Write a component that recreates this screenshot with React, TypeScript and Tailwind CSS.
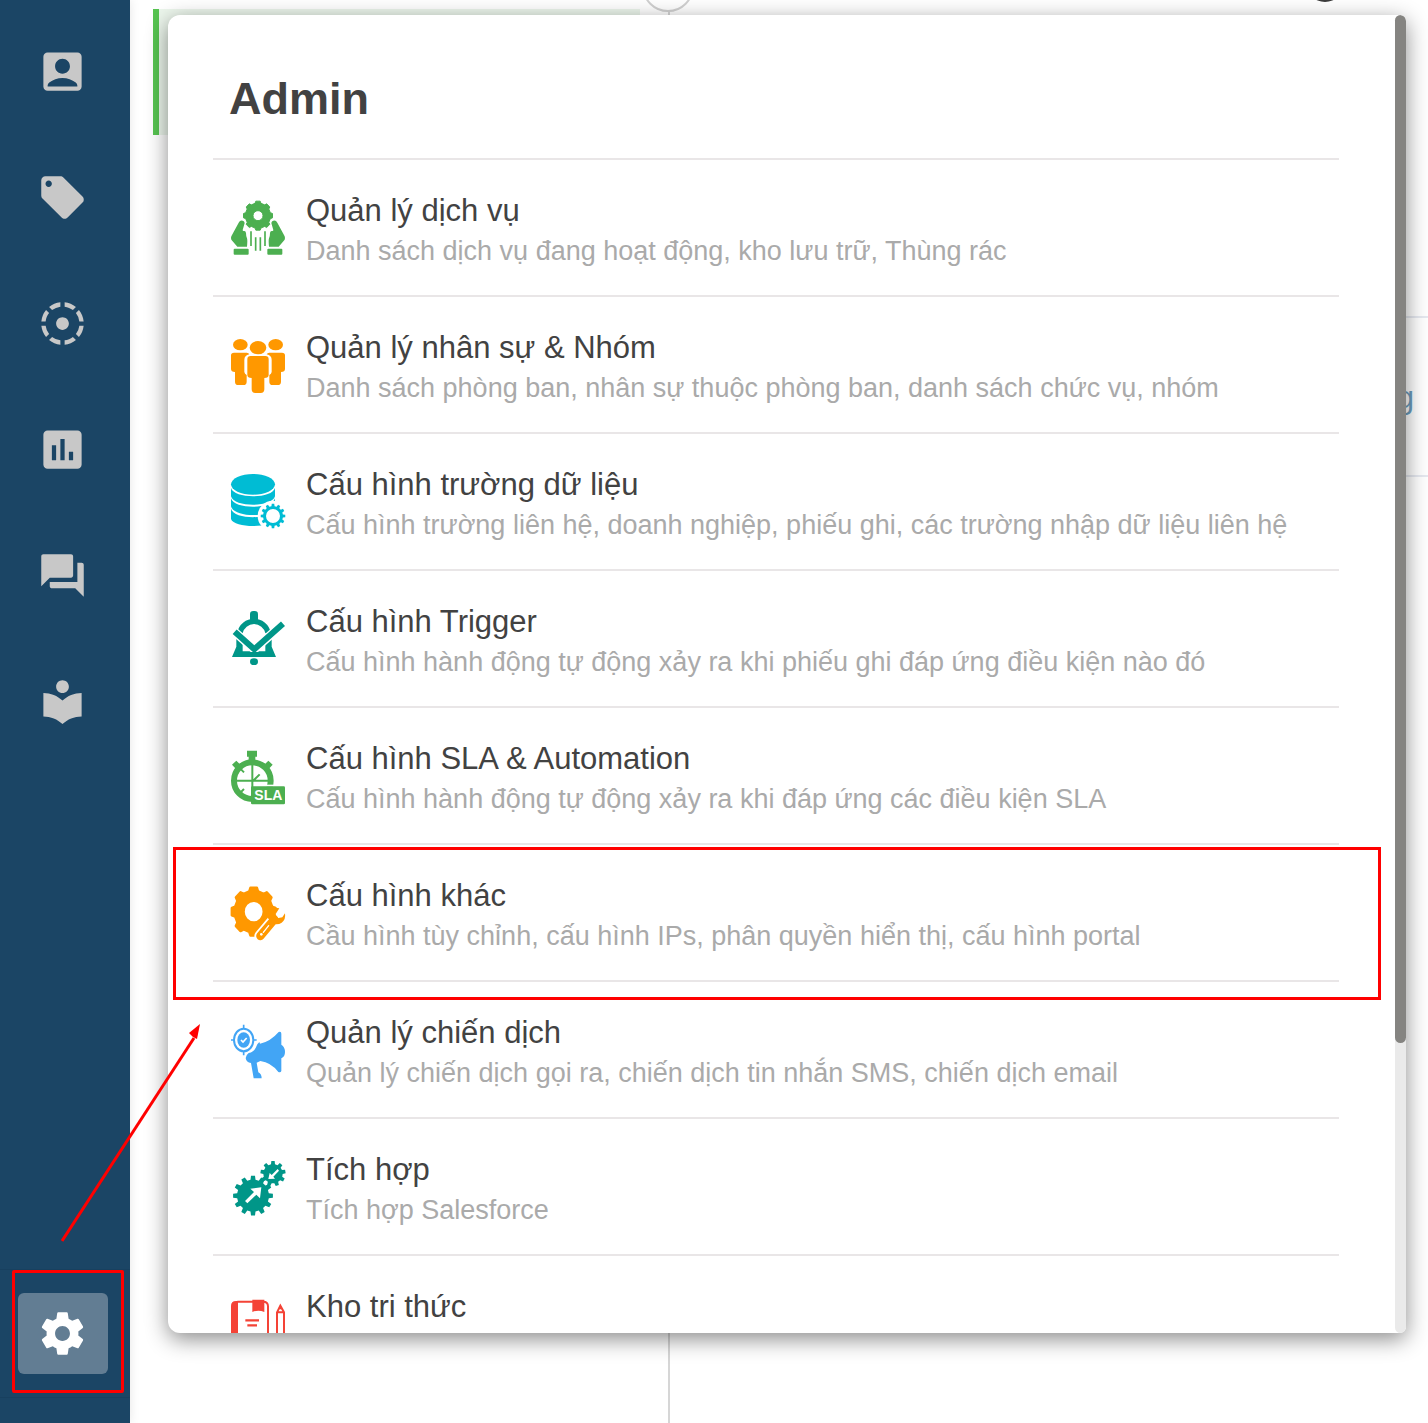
import React from 'react';
import {
  MdAccountBox,
  MdFilterTiltShift,
  MdForum,
  MdInsertChart,
  MdLocalLibrary,
  MdLocalOffer,
} from 'react-icons/md';

interface MenuItem {
  title: string;
  desc: string;
  icon: React.ReactNode;
  highlighted?: boolean;
}

// Builds a gear outline with square teeth around (cx, cy)
const gearPath = (cx: number, cy: number, outer: number, root: number, teeth: number, hole = 0) => {
  const step = (Math.PI * 2) / teeth;
  const pt = (r: number, a: number) => `${(cx + r * Math.sin(a)).toFixed(1)} ${(cy - r * Math.cos(a)).toFixed(1)}`;
  const points: string[] = [];
  for (let i = 0; i < teeth; i++) {
    const a = i * step;
    points.push(pt(root, a - step * 0.3), pt(outer, a - step * 0.19), pt(outer, a + step * 0.19), pt(root, a + step * 0.3));
  }
  let d = `M${points.join('L')}Z`;
  if (hole) {
    d += `M${cx - hole} ${cy}a${hole} ${hole} 0 1 0 ${hole * 2} 0a${hole} ${hole} 0 1 0 ${-hole * 2} 0Z`;
  }
  return d;
};

const iconClass = "w-[54px] h-[54px] shrink-0 mt-[10px] overflow-visible";

const ServiceIcon = () => {
  const hand = 'M64 167L86 126q4-8 12-6q8 3 5 11L98 148q0 4 4 3q5-1 6 6q0 10 3 16q2 5 0 25H82L64 177q-2-5 0-10Z';
  return (
    <svg viewBox="63 61 162 162" className={iconClass} fill="#4caf50">
      <path d={gearPath(144, 105, 44, 38, 8, 15)} fillRule="evenodd" stroke="#4caf50" strokeWidth="3" strokeLinejoin="round" />
      <path d={hand} />
      <rect x="71" y="204" width="45" height="18" rx="3" />
      <g transform="translate(288 0) scale(-1 1)">
        <path d={hand} />
        <rect x="71" y="204" width="45" height="18" rx="3" />
      </g>
      <path d="M123 152V196M137 170V210M151 170V210M165 152V196" stroke="#4caf50" strokeWidth="5" />
    </svg>
  );
};

const PeopleIcon = () => {
  const side = 'M63 526q0-8 9-8h38q6 0 8 5q-15 3-15 17v36q1 6 7 9v20q0 10-10 10H85q-10 0-10-10V576q-12 0-12-9Z';
  return (
    <svg viewBox="63 474 162 162" className={iconClass} fill="#ff9800">
      <ellipse cx="91" cy="494" rx="22" ry="17" />
      <ellipse cx="197" cy="494" rx="22" ry="17" />
      <ellipse cx="144" cy="503" rx="25" ry="20" />
      <path d={side} />
      <path d={side} transform="translate(288 0) scale(-1 1)" />
      <path d="M112 538q0-10 10-10h44q10 0 10 10v47q0 9-13 9v34q0 11-11 11h-16q-11 0-11-11v-34q-13 0-13-9Z" />
    </svg>
  );
};

const DatabaseIcon = () => (
  <svg viewBox="63 75 162 162" className={iconClass} fill="#00bcd4">
    <ellipse cx="129" cy="103" rx="66" ry="31" />
    <path d="M63 114C72 147 186 147 195 114V139C186 173 72 173 63 139Z" />
    <path d="M63 145C72 179 186 179 195 145V169C186 204 72 204 63 169Z" />
    <path d="M63 176C72 210 186 210 195 176V207C186 235 72 235 63 207Z" />
    <circle cx="189" cy="198" r="46" fill="#fff" />
    <path d={gearPath(189, 198, 37, 30, 12, 21)} fillRule="evenodd" />
  </svg>
);

const TriggerIcon = () => (
  <svg viewBox="63 486 162 162" className={iconClass} fill="#009688">
    <rect x="120" y="483" width="24" height="34" rx="10" />
    <path d="M90 548A43 43 0 0 1 174 548" fill="none" stroke="#009688" strokeWidth="16" />
    <path d="M79 566L98 580V604H166V580L185 564V590L198 621H66L79 590Z" />
    <path d="M70 542L133 598L223 518" fill="none" stroke="#fff" strokeWidth="26" />
    <path d="M74 545L133 598L219 521" fill="none" stroke="#009688" strokeWidth="18" />
    <path d="M84 606H180L187 621H78Z" />
    <ellipse cx="132" cy="635" rx="12" ry="10" />
  </svg>
);

const SlaIcon = () => (
  <svg viewBox="63 58 162 162" className={iconClass} fill="#4caf50">
    <circle cx="127" cy="153" r="55" fill="none" stroke="#4caf50" strokeWidth="18" />
    <path d="M111 63h30v18h-5v14h-20V81h-5Z" />
    <path d="M66 105l13-12l12 12l-13 13ZM188 105l-13-12l-12 12l13 13Z" />
    <path d="M127 105V200M80 153H174M127 156L149 134M91 117l11 11M91 189l11-11" fill="none" stroke="#4caf50" strokeWidth="6" />
    <rect x="132" y="165" width="93" height="6" fill="#fff" />
    <rect x="123" y="170" width="102" height="54" rx="4" />
    <text x="175" y="212" textAnchor="middle" fontFamily="Liberation Sans, Arial, sans-serif" fontWeight="700" fontSize="42" fill="#fff">SLA</text>
  </svg>
);

const OtherIcon = () => (
  <svg viewBox="63 468 162 162" className={iconClass} fill="#ff9800">
    <g transform="translate(131 545) scale(0.92 1)">
      <path d={gearPath(0, 0, 72, 62, 8, 33)} fillRule="evenodd" stroke="#ff9800" strokeWidth="8" strokeLinejoin="round" />
    </g>
    <path d="M151 618L193 568" stroke="#fff" strokeWidth="36" strokeLinecap="round" />
    <circle cx="204" cy="560" r="26" fill="#fff" />
    <path d="M151 618L193 568" stroke="#ff9800" strokeWidth="25" strokeLinecap="round" />
    <path d="M208 535l-11 17l5 13l15-3l8-12q3 19-10 28q-9 6-22 4l-20-18q-1-18 9-26q10-8 26-3Z" />
    <path d="M160 607L176 587" stroke="#fff" strokeWidth="4" strokeLinecap="round" />
    <circle cx="154" cy="613" r="4" fill="#fff" />
  </svg>
);

const CampaignIcon = () => (
  <svg viewBox="63 40 162 162" className={iconClass} fill="#42a5f5">
    <path d="M107 145q1-9 9-15q18-3 26-26l6-7l2 5Q181 96 206 67q8-3 8 5v33q11 7 11 22q0 14-11 19v38q-2 6-9 3Q183 158 151 154l-11 5l5 29q10 5 10 18h-24L123 160q-14-1-16-15Z" />
    <ellipse cx="101" cy="91" rx="29" ry="34" fill="none" stroke="#42a5f5" strokeWidth="6" />
    <ellipse cx="101" cy="91" rx="19" ry="23" />
    <path d="M101 45V57M101 125V137M63 91H72M130 91H140" stroke="#42a5f5" strokeWidth="5" />
    <path d="M93 91l6 6l11-12" fill="none" stroke="#fff" strokeWidth="5" />
  </svg>
);

const IntegrationIcon = () => (
  <svg viewBox="63 450 162 162" className={iconClass} fill="#009688">
    <path d={gearPath(129, 557, 60, 48, 12)} />
    <path d={gearPath(189, 491, 38, 29, 9)} />
    <path d="M105 573L132 546L121 536L154 532L150 565L139 554L112 580Z" fill="#fff" />
    <path d="M203 477L185 495L179 489L175 507L195 506L190 500L207 482Z" fill="#fff" />
  </svg>
);

const KnowledgeIcon = () => (
  <svg viewBox="243 82 162 162" className={iconClass} fill="#f44336">
    <path d="M264 252h-8q-13 0-13-13V109q0-15 15-15h6Z" />
    <path d="M262 96h78q14 0 14 14v129q0 11-11 11h-81" fill="none" stroke="#f44336" strokeWidth="6" />
    <path d="M307 90h36v37q-18-8-36 0Z" />
    <path d="M286 152H327M292 167H321" stroke="#f44336" strokeWidth="7" />
    <path d="M381 128L391 108L402 128V238H381ZM381 128H402" fill="none" stroke="#f44336" strokeWidth="6" />
    <path d="M384 119l7-13l7 13Z" />
  </svg>
);

const SettingsIcon = () => (
  <svg viewBox="0 0 24 24" className="size-[51px]" fill="currentColor">
    <path d="M19.43 12.98c.04-.32.07-.64.07-.98s-.03-.66-.07-.98l2.11-1.65c.19-.15.24-.42.12-.64l-2-3.46c-.12-.22-.39-.3-.61-.22l-2.49 1c-.52-.4-1.08-.73-1.69-.98l-.38-2.65C14.46 2.18 14.25 2 14 2h-4c-.25 0-.46.18-.49.42l-.38 2.65c-.61.25-1.17.59-1.69.98l-2.49-1c-.23-.09-.49 0-.61.22l-2 3.46c-.13.22-.07.49.12.64l2.11 1.65c-.04.32-.07.65-.07.98s.03.66.07.98l-2.11 1.65c-.19.15-.24.42-.12.64l2 3.46c.12.22.39.3.61.22l2.49-1c.52.4 1.08.73 1.69.98l.38 2.65c.03.24.24.42.49.42h4c.25 0 .46-.18.49-.42l.38-2.65c.61-.25 1.17-.59 1.69-.98l2.49 1c.23.09.49 0 .61-.22l2-3.46c.12-.22.07-.49-.12-.64l-2.11-1.65zM12 15.5c-1.93 0-3.5-1.57-3.5-3.5s1.57-3.5 3.5-3.5 3.5 1.57 3.5 3.5-1.57 3.5-3.5 3.5z" />
  </svg>
);

const MENU: MenuItem[] = [
  { title: 'Quản lý dịch vụ', desc: 'Danh sách dịch vụ đang hoạt động, kho lưu trữ, Thùng rác', icon: <ServiceIcon /> },
  { title: 'Quản lý nhân sự & Nhóm', desc: 'Danh sách phòng ban, nhân sự thuộc phòng ban, danh sách chức vụ, nhóm', icon: <PeopleIcon /> },
  { title: 'Cấu hình trường dữ liệu', desc: 'Cấu hình trường liên hệ, doanh nghiệp, phiếu ghi, các trường nhập dữ liệu liên hệ', icon: <DatabaseIcon /> },
  { title: 'Cấu hình Trigger', desc: 'Cấu hình hành động tự động xảy ra khi phiếu ghi đáp ứng điều kiện nào đó', icon: <TriggerIcon /> },
  { title: 'Cấu hình SLA & Automation', desc: 'Cấu hình hành động tự động xảy ra khi đáp ứng các điều kiện SLA', icon: <SlaIcon /> },
  { title: 'Cấu hình khác', desc: 'Cầu hình tùy chỉnh, cấu hình IPs, phân quyền hiển thị, cấu hình portal', icon: <OtherIcon />, highlighted: true },
  { title: 'Quản lý chiến dịch', desc: 'Quản lý chiến dịch gọi ra, chiến dịch tin nhắn SMS, chiến dịch email', icon: <CampaignIcon /> },
  { title: 'Tích hợp', desc: 'Tích hợp Salesforce', icon: <IntegrationIcon /> },
  { title: 'Kho tri thức', desc: 'Câu hỏi', icon: <KnowledgeIcon /> },
];

const NAV = [
  { label: 'Liên hệ', Icon: MdAccountBox },
  { label: 'Phiếu ghi', Icon: MdLocalOffer },
  { label: 'Chiến dịch', Icon: MdFilterTiltShift },
  { label: 'Báo cáo', Icon: MdInsertChart },
  { label: 'Trò chuyện', Icon: MdForum },
  { label: 'Kho tri thức', Icon: MdLocalLibrary },
];

const navButtonClass = "flex items-center justify-center w-[90px] h-[81px] pr-px pb-px rounded-md";

const Sidebar = () => (
  <nav className="relative z-10 flex flex-col justify-between w-[130px] shrink-0 bg-[#1b4565] shadow-[0_0_10px_rgba(0,0,0,0.1)]">
    <div className="flex flex-col gap-[45px] pt-[31px] pl-[18px]">
      {NAV.map(({ label, Icon }) => (
        <button key={label} type="button" aria-label={label} className={`${navButtonClass} text-[#c8c8c8]`}>
          <Icon size={51} />
        </button>
      ))}
    </div>
    <div className="relative mb-[25px] py-[23px] pl-[18px] border-y border-[#18405f]">
      <button type="button" aria-label="Cài đặt" className={`${navButtonClass} bg-[#627d93] text-white`}>
        <SettingsIcon />
      </button>
      <div className="absolute top-0 bottom-1 left-3 right-[6px] border-3 border-[#ff0000] rounded-xs" />
    </div>
  </nav>
);

// Page content that stays behind the admin menu
const Backdrop = () => (
  <main className="relative flex flex-1 overflow-hidden">
    <section className="w-[540px] shrink-0 pt-[9px] pl-[23px] pr-[28px] border-r-2 border-[#d6d6d6]">
      <div className="h-[126px] bg-[#ecf6ec] border-l-6 border-[#57c451]" />
    </section>
    <section className="flex-1">
      <div className="h-[318px] border-b-2 border-[#e6e9f0]" />
      <div className="flex items-center justify-end h-[159px] pt-1 pr-[14px] border-b-2 border-[#e6e9f0] text-[31px] text-[#6c9dbd]">g</div>
    </section>
    <div className="absolute -top-10 left-[512px] size-[52px] rounded-full bg-white border-2 border-[#d0d0d0]" />
    <div className="absolute -top-9 right-[84px] size-[38px] rounded-full bg-[#3c3c3c]" />
  </main>
);

const MenuRow: React.FC<{ item: MenuItem }> = ({ item }) => (
  <li className="relative border-b-2 border-[#e9e6e7]">
    <a href="#" className="flex gap-[21px] pt-[31px] pb-6 pl-[18px]">
      {item.icon}
      <span className="flex flex-col whitespace-nowrap">
        <span className="text-[31px] leading-[40px] text-[#424242]">{item.title}</span>
        <span className="text-[27px] leading-[40px] text-[#aaaaaa]">{item.desc}</span>
      </span>
    </a>
    {item.highlighted && (
      <div className="pointer-events-none absolute z-10 top-[2px] -bottom-5 -left-10 -right-[42px] border-3 border-[#ff0000]" />
    )}
  </li>
);

export default function App() {
  return (
    <div className="relative flex h-screen overflow-hidden bg-white font-['Liberation_Sans',Arial,sans-serif]">
      <Sidebar />
      <Backdrop />

      <div className="absolute top-[15px] bottom-[90px] left-[168px] right-[22px] flex overflow-hidden rounded-l-xl rounded-r-md bg-white shadow-[0_6px_22px_rgba(0,0,0,0.46)]">
        <div className="flex-1 overflow-hidden pl-[45px] pr-[56px]">
          <h1 className="pt-[57px] pb-8 pl-4 border-b-2 border-[#e9e6e7] text-[45px] leading-[54px] font-bold text-[#424242]">Admin</h1>
          <ul>
            {MENU.map(item => <MenuRow key={item.title} item={item} />)}
          </ul>
        </div>
        <div className="w-[11px] shrink-0 rounded-full bg-[#eaeaea]">
          <div className="h-[78%] rounded-full bg-[#858481]" />
        </div>
      </div>

      {/* arrow from the settings button to the highlighted row */}
      <svg viewBox="0 0 140 220" className="pointer-events-none absolute z-20 left-[61px] bottom-[180px] w-[140px] h-[220px]">
        <path d="M1 218L133 15" fill="none" stroke="#ff0000" strokeWidth="3" />
        <path d="M139 1L136 16L132 14L128 10Z" fill="#ff0000" />
      </svg>
    </div>
  );
}
